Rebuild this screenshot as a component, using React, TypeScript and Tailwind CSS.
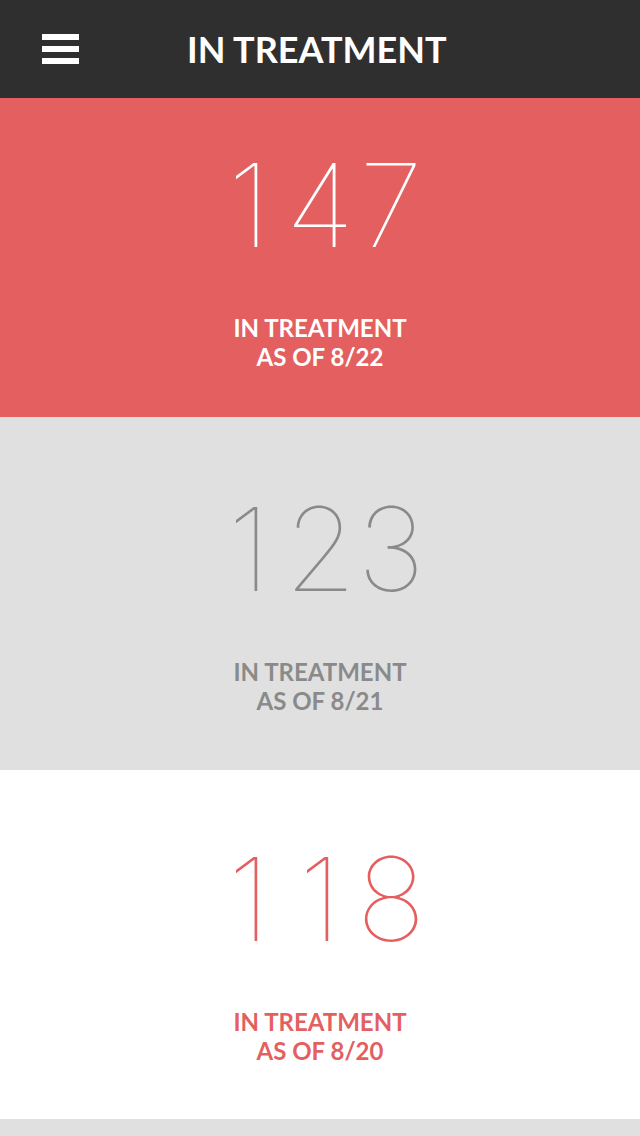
const stats = [
  { value: '147', date: '8/22', bg: 'bg-[#e45f5f]', num: 'text-white', label: 'text-white', h: 'h-[319px]', pt: 'pt-[49px]' },
  { value: '123', date: '8/21', bg: 'bg-[#e0e0e0]', num: 'text-[#8a8a8a]', label: 'text-[#8a8a8a]', h: 'h-[353px]', pt: 'pt-[74px]' },
  { value: '118', date: '8/20', bg: 'bg-white', num: 'text-[#e45f5f]', label: 'text-[#e45f5f]', h: 'h-[349px]', pt: 'pt-[71px]' },
]

function StatBlock({ stat }: { stat: (typeof stats)[number] }) {
  return (
    <section className={`${stat.bg} ${stat.h} ${stat.pt} flex flex-col items-center`}>
      {/* fixed-width digit cells, like the tabular figures in the design */}
      <div className={`${stat.num} flex font-['Inter',sans-serif] text-[116px] leading-none font-thin`}>
        {stat.value.split('').map((d, i) => (
          <span key={i} className="w-[71px] text-center">
            {d}
          </span>
        ))}
      </div>
      <div className={`${stat.label} mt-[50px] text-center text-[24px] leading-[29px] font-bold`}>
        IN TREATMENT
        <br />
        AS OF {stat.date}
      </div>
    </section>
  )
}

export default function App() {
  return (
    <div className="min-h-[1136px] bg-[#e0e0e0] font-['Lato','Liberation_Sans',sans-serif]">
      <header className="flex h-[98px] items-center bg-[#2f2f2f] pl-[42px]">
        <div className="flex w-[37px] flex-col gap-[6px]">
          <span className="h-[6px] bg-white" />
          <span className="h-[6px] bg-white" />
          <span className="h-[6px] bg-white" />
        </div>
        <h1 className="ml-[108px] text-[36px] leading-none font-bold text-white">IN TREATMENT</h1>
      </header>
      {stats.map((s) => (
        <StatBlock key={s.value} stat={s} />
      ))}
    </div>
  )
}
